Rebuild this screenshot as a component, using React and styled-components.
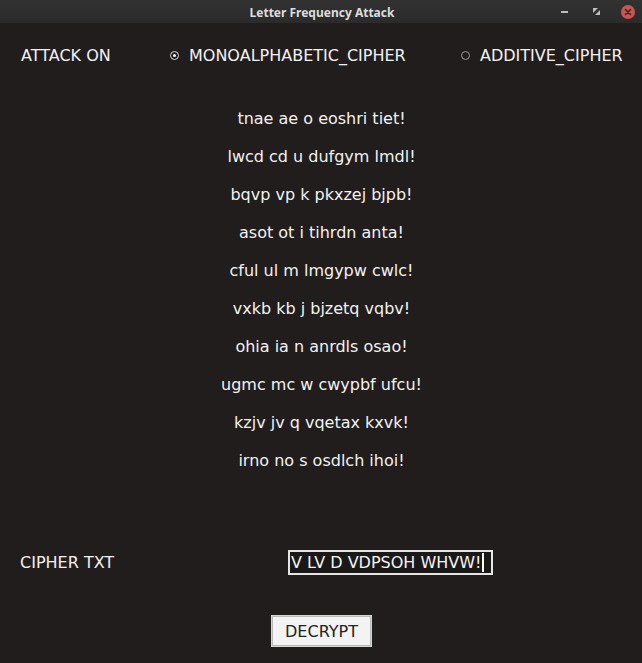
import React from "react";
import styled, { createGlobalStyle } from "styled-components";

const Global = createGlobalStyle`
  html, body { margin: 0; padding: 0; background: #211d1d; }
  body { font-family: "DejaVu Sans", sans-serif; }
`;

const Window = styled.div`
  width: 642px;
  height: 663px;
  background: #211d1d;
  display: flex;
  flex-direction: column;
  overflow: hidden;
  color: #f2f2f2;
  font-family: "DejaVu Sans", sans-serif;
  font-size: 16px;
`;

const TitleBar = styled.div`
  height: 23px;
  background: linear-gradient(#313131, #2b2b2b);
  display: grid;
  grid-template-columns: 1fr auto 1fr;
  align-items: center;
`;

const Title = styled.div`
  grid-column: 2;
  font-family: "Noto Sans", sans-serif;
  font-weight: 700;
  font-size: 12px;
  color: #dddddd;
  padding-left: 2px;
  padding-top: 1px;
`;

const Controls = styled.div`
  grid-column: 3;
  justify-self: end;
  display: flex;
  align-items: center;
  padding-right: 7px;
`;

const MinBtn = styled.span`
  display: block;
  width: 7px;
  height: 2px;
  background: #bdbdbd;
  margin-right: 24px;
`;

const RestoreIcon = styled.svg`
  margin-right: 20px;
`;

const CloseBtn = styled.span`
  width: 14px;
  height: 14px;
  border-radius: 50%;
  background: #c95650;
  display: flex;
  align-items: center;
  justify-content: center;
`;

const Content = styled.div`
  display: flex;
  flex-direction: column;
`;

const ModeRow = styled.div`
  margin-top: 23px;
  height: 19px;
  display: grid;
  grid-template-columns: 149px 291px auto;
  align-items: center;
  padding-left: 21px;
`;

const Label = styled.span`
  line-height: 19px;
  white-space: nowrap;
`;

const Option = styled.div`
  display: flex;
  align-items: center;
  gap: 10px;
  white-space: nowrap;
`;

const Radio = styled.span`
  box-sizing: border-box;
  width: 9px;
  height: 9px;
  border-radius: 50%;
  border: 1px solid ${(p) => (p.$checked ? "#d8d8d8" : "#9a9a9a")};
  display: flex;
  align-items: center;
  justify-content: center;
  &::after {
    content: "";
    width: 3px;
    height: 3px;
    border-radius: 50%;
    background: #ffffff;
    display: ${(p) => (p.$checked ? "block" : "none")};
  }
`;

const Lines = styled.div`
  margin-top: 35px;
  display: flex;
  flex-direction: column;
  align-items: center;
`;

const Line = styled.div`
  height: 38px;
  line-height: 38px;
  text-align: center;
  white-space: nowrap;
  padding-left: 1px;
`;

const CipherRow = styled.div`
  margin-top: 70px;
  display: grid;
  grid-template-columns: 268px auto;
  align-items: center;
  padding-left: 20px;
`;

const Field = styled.div`
  box-sizing: border-box;
  width: 205px;
  height: 25px;
  border: 2px solid #e6e6e6;
  background: #1b1818;
  display: flex;
  align-items: center;
  padding-left: 1px;
  white-space: nowrap;
  color: #f4f4f4;
`;

const Caret = styled.span`
  display: inline-block;
  width: 2px;
  height: 19px;
  background: #ffffff;
  margin-left: 1px;
`;

const ButtonRow = styled.div`
  margin-top: 40px;
  display: flex;
  justify-content: center;
  padding-left: 1px;
`;

const Button = styled.button`
  box-sizing: border-box;
  width: 101px;
  height: 32px;
  background: #f3f3f3;
  border: 1px solid #d6d6d6;
  box-shadow: inset 0 0 0 1px #b9b9b9;
  color: #222222;
  font-family: "DejaVu Sans", sans-serif;
  font-size: 16px;
  padding: 0;
`;

const lines = [
  "tnae ae o eoshri tiet!",
  "lwcd cd u dufgym lmdl!",
  "bqvp vp k pkxzej bjpb!",
  "asot ot i tihrdn anta!",
  "cful ul m lmgypw cwlc!",
  "vxkb kb j bjzetq vqbv!",
  "ohia ia n anrdls osao!",
  "ugmc mc w cwypbf ufcu!",
  "kzjv jv q vqetax kxvk!",
  "irno no s osdlch ihoi!",
];

export default function App() {
  return (
    <Window>
      <Global />
      <TitleBar>
        <Title>Letter Frequency Attack</Title>
        <Controls>
          <MinBtn />
          <RestoreIcon width="9" height="9" viewBox="0 0 9 9">
            <path d="M1 1 H6 L1 6 Z" fill="#bdbdbd" />
            <path d="M8 8 H3 L8 3 Z" fill="#bdbdbd" />
          </RestoreIcon>
          <CloseBtn>
            <svg width="8" height="8" viewBox="0 0 8 8">
              <path d="M1.5 1.5 L6.5 6.5 M6.5 1.5 L1.5 6.5" stroke="#3a2323" strokeWidth="1.6" strokeLinecap="round" />
            </svg>
          </CloseBtn>
        </Controls>
      </TitleBar>
      <Content>
        <ModeRow>
          <Label>ATTACK ON</Label>
          <Option>
            <Radio $checked />
            <Label>MONOALPHABETIC_CIPHER</Label>
          </Option>
          <Option>
            <Radio />
            <Label>ADDITIVE_CIPHER</Label>
          </Option>
        </ModeRow>
        <Lines>
          {lines.map((l) => (
            <Line key={l}>{l}</Line>
          ))}
        </Lines>
        <CipherRow>
          <Label>CIPHER TXT</Label>
          <Field>
            V LV D VDPSOH WHVW!
            <Caret />
          </Field>
        </CipherRow>
        <ButtonRow>
          <Button>DECRYPT</Button>
        </ButtonRow>
      </Content>
    </Window>
  );
}
